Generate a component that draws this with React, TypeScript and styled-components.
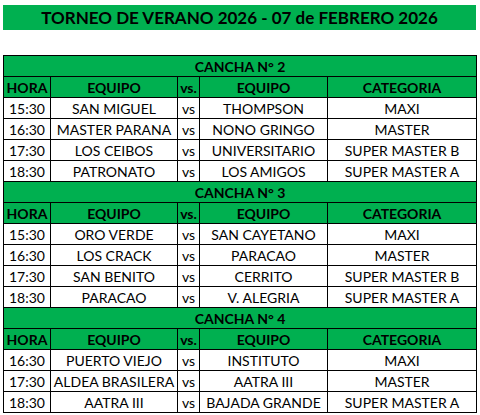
import React from "react";
import styled, { createGlobalStyle } from "styled-components";

type Match = [string, string, string, string];

interface Court {
  name: string;
  matches: Match[];
}

const courts: Court[] = [
  {
    name: "CANCHA N° 2",
    matches: [
      ["15:30", "SAN MIGUEL", "THOMPSON", "MAXI"],
      ["16:30", "MASTER PARANA", "NONO GRINGO", "MASTER"],
      ["17:30", "LOS CEIBOS", "UNIVERSITARIO", "SUPER MASTER B"],
      ["18:30", "PATRONATO", "LOS AMIGOS", "SUPER MASTER A"],
    ],
  },
  {
    name: "CANCHA N° 3",
    matches: [
      ["15:30", "ORO VERDE", "SAN CAYETANO", "MAXI"],
      ["16:30", "LOS CRACK", "PARACAO", "MASTER"],
      ["17:30", "SAN BENITO", "CERRITO", "SUPER MASTER B"],
      ["18:30", "PARACAO", "V. ALEGRIA", "SUPER MASTER A"],
    ],
  },
  {
    name: "CANCHA N° 4",
    matches: [
      ["16:30", "PUERTO VIEJO", "INSTITUTO", "MAXI"],
      ["17:30", "ALDEA BRASILERA", "AATRA III", "MASTER"],
      ["18:30", "AATRA III", "BAJADA GRANDE", "SUPER MASTER A"],
    ],
  },
];

const GlobalStyle = createGlobalStyle`
  body {
    margin: 0;
    background: #ffffff;
    font-family: "Lato", "Liberation Sans", sans-serif;
    color: #000000;
  }
`;

const Page = styled.div`
  width: 480px;
  padding: 5px 4px 0 3px;
  box-sizing: border-box;
  display: flex;
  flex-direction: column;
  gap: 25px;
`;

const Title = styled.div`
  height: 25px;
  background: #00b050;
  display: flex;
  align-items: center;
  justify-content: center;
  font-size: 17px;
  font-weight: 700;
`;

const Table = styled.table`
  border-collapse: collapse;
  width: 473px;
  table-layout: fixed;
  font-size: 14px;
`;

const Cell = styled.td<{ $head?: boolean }>`
  border: 1px solid #000000;
  height: 19px;
  padding: 1px 0 0;
  text-align: center;
  white-space: nowrap;
  line-height: 19px;
  font-weight: ${(p) => (p.$head ? 700 : 400)};
  background: ${(p) => (p.$head ? "#00b050" : "#ffffff")};
`;

const CourtCell = styled.td`
  border: 1px solid #000000;
  height: 19px;
  padding: 1px 0 0;
  text-align: center;
  line-height: 19px;
  font-weight: 700;
  background: #00b050;
`;

const App = () => {
  return (
    <>
      <GlobalStyle />
      <Page>
        <Title>TORNEO DE VERANO 2026 - 07 de FEBRERO 2026</Title>
        <Table>
          <colgroup>
            <col style={{ width: 47 }} />
            <col style={{ width: 127 }} />
            <col style={{ width: 22 }} />
            <col style={{ width: 128 }} />
            <col style={{ width: 149 }} />
          </colgroup>
          <tbody>
            {courts.map((court) => (
              <React.Fragment key={court.name}>
                <tr>
                  <CourtCell colSpan={5}>{court.name}</CourtCell>
                </tr>
                <tr>
                  <Cell $head>HORA</Cell>
                  <Cell $head>EQUIPO</Cell>
                  <Cell $head>vs.</Cell>
                  <Cell $head>EQUIPO</Cell>
                  <Cell $head>CATEGORIA</Cell>
                </tr>
                {court.matches.map(([time, home, away, cat]) => (
                  <tr key={time + home}>
                    <Cell>{time}</Cell>
                    <Cell>{home}</Cell>
                    <Cell>vs</Cell>
                    <Cell>{away}</Cell>
                    <Cell>{cat}</Cell>
                  </tr>
                ))}
              </React.Fragment>
            ))}
          </tbody>
        </Table>
      </Page>
    </>
  );
};

export default App;
